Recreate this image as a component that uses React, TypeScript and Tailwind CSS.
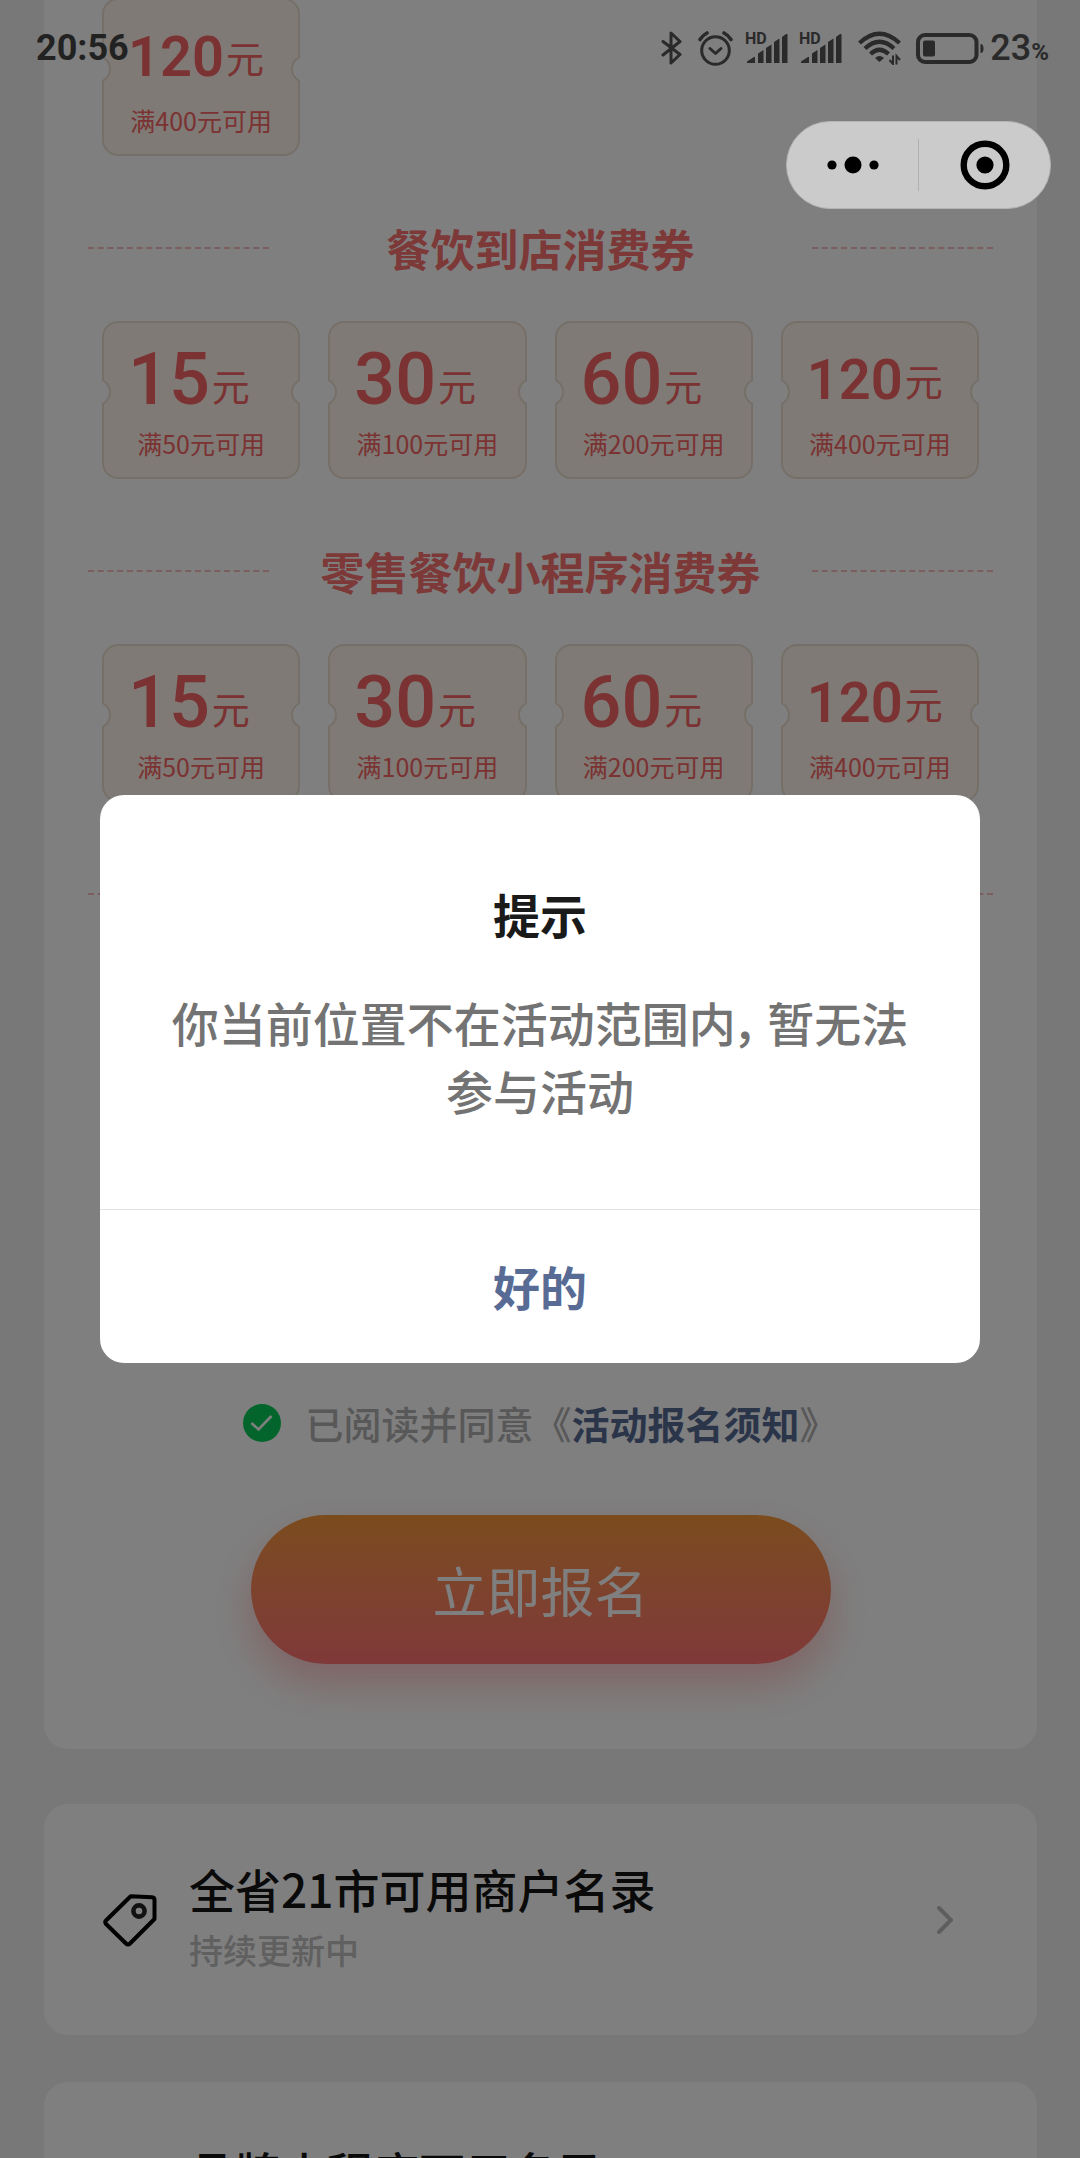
import React from "react";

type Coupon = { amount: string; threshold: string };

const COUPONS: Coupon[] = [
  { amount: "15", threshold: "满50元可用" },
  { amount: "30", threshold: "满100元可用" },
  { amount: "60", threshold: "满200元可用" },
  { amount: "120", threshold: "满400元可用" },
];

function Notch({ side }: { side: "left" | "right" }) {
  const left = side === "left";
  return (
    <span
      className={
        left
          ? "absolute -left-0.5 top-[55px] flex h-7 w-[9px] justify-end overflow-hidden"
          : "absolute -right-0.5 top-[55px] flex h-7 w-[9px] justify-start overflow-hidden"
      }
    >
      <span className="size-7 shrink-0 rounded-full border-2 border-[#eadfd0] bg-white" />
    </span>
  );
}

function CouponCard({ amount, threshold }: Coupon) {
  const long = amount.length > 2;
  return (
    <li className="relative rounded-2xl border-2 border-[#eadfd0] bg-[#fff4ea] pb-4 pt-[25px] text-[#f56464]">
      <Notch side="left" />
      <Notch side="right" />
      <p className="flex h-16 items-end gap-0.5 pl-6">
        <span
          className={
            long
              ? "font-['Roboto',sans-serif] text-[56px] font-semibold leading-[64px]"
              : "font-['Roboto',sans-serif] text-[72px] font-medium leading-[64px]"
          }
        >
          {amount}
        </span>
        <span className={long ? "text-[38px] leading-[64px]" : "text-[38px] leading-[54px]"}>元</span>
      </p>
      <p className="mt-[13px] text-center text-[25px] leading-9">{threshold}</p>
    </li>
  );
}

function CouponGrid({ coupons }: { coupons: Coupon[] }) {
  return (
    <ul className="grid grid-cols-4 gap-7 px-[58px]">
      {coupons.map((c) => (
        <CouponCard key={c.amount} {...c} />
      ))}
    </ul>
  );
}

function SectionHeader({ title }: { title?: string }) {
  return (
    <div className="mb-[43px] mt-[62px] flex h-[60px] items-center justify-between px-11">
      <span className="w-[181px] border-t-2 border-dashed border-[#f8bcbc]" />
      {title && <h2 className="text-[44px] font-bold leading-[60px] text-[#fa7070]">{title}</h2>}
      <span className="w-[181px] border-t-2 border-dashed border-[#f8bcbc]" />
    </div>
  );
}

function BluetoothIcon() {
  return (
    <svg width="21" height="34" viewBox="0 0 21 34" fill="none" stroke="currentColor" strokeWidth="3" strokeLinejoin="round" strokeLinecap="round">
      <path d="M2 10.5 L19 23.5 L10 32 V2 L19 10.5 L2 24" />
    </svg>
  );
}

function AlarmIcon() {
  return (
    <svg width="35" height="35" viewBox="0 0 35 35" fill="none" stroke="currentColor" strokeWidth="3" strokeLinecap="round">
      <circle cx="17.5" cy="19.5" r="13.8" />
      <path d="M12 17.5 L17.5 22.5 L23 17.5" strokeLinejoin="round" />
      <path d="M2 8.5 C4 5.5 6 3.5 9 2" strokeWidth="3.6" />
      <path d="M33 8.5 C31 5.5 29 3.5 26 2" strokeWidth="3.6" />
    </svg>
  );
}

function SignalIcon() {
  return (
    <svg width="42" height="32" viewBox="0 0 42 32" fill="currentColor" className="overflow-visible">
      <text x="-1" y="12" fontSize="16" fontWeight="700" fontFamily="Roboto, sans-serif">
        HD
      </text>
      <path d="M1 31 V29.500 L8 25 Q9 24.500 9 25.500 V31 Z" />
      <path d="M12 31 V21.500 L17.500 18 V31 Z" />
      <path d="M20 31 V16 L25.500 12.500 V31 Z" />
      <path d="M28 31 V10 L33.500 6.500 V31 Z" />
      <path d="M36 31 V5 L40 2 Q41.500 1.500 41.500 3 V31 Z" />
    </svg>
  );
}

function WifiIcon() {
  return (
    <svg width="43" height="34" viewBox="0 0 43 34" fill="none" stroke="currentColor" strokeWidth="4.2">
      <path d="M1.500 12 Q21.500 -6.500 41.500 12" />
      <path d="M7 17.500 Q21.500 4 36 17.500" />
      <path d="M12.500 23 Q21.500 14.500 30.500 23" />
      <path d="M17 27 Q21.500 23 26 27 L21.500 31 Z" fill="currentColor" stroke="none" />
      <path d="M35 24.500 V33 L31.500 29" strokeWidth="2" />
      <path d="M38.500 33.500 V25 L42 29" strokeWidth="2" />
    </svg>
  );
}

function BatteryIcon() {
  return (
    <svg width="68" height="31" viewBox="0 0 68 31" fill="none" stroke="currentColor">
      <rect x="2" y="2" width="58.500" height="27" rx="7" strokeWidth="4" />
      <rect x="7" y="7.500" width="12" height="16" rx="2" fill="currentColor" stroke="none" />
      <path d="M64.500 11 Q67.500 11 67.500 15.500 Q67.500 20 64.500 20 Z" fill="currentColor" stroke="none" />
    </svg>
  );
}

function StatusBar() {
  return (
    <div className="flex h-24 items-center justify-between pl-9 pr-[31px] text-[#222] font-['Roboto',sans-serif]">
      <time className="text-4xl font-bold">20:56</time>
      <div className="flex items-center text-[#2a2a2a]">
        <BluetoothIcon />
        <span className="ml-4">
          <AlarmIcon />
        </span>
        <span className="ml-[13px]">
          <SignalIcon />
        </span>
        <span className="ml-3">
          <SignalIcon />
        </span>
        <span className="ml-4">
          <WifiIcon />
        </span>
        <span className="ml-[15px]">
          <BatteryIcon />
        </span>
        <span className="ml-1.5 text-4xl font-medium">
          23<span className="text-2xl font-bold">%</span>
        </span>
      </div>
    </div>
  );
}

function MiniProgramCapsule() {
  return (
    <div className="mr-[29px] mt-[25px] flex h-[88px] w-[265px] items-center self-end rounded-full border border-[#b4b4b4] bg-[#cbcbcb] text-black">
      <button type="button" aria-label="更多" className="flex h-full flex-1 items-center justify-center">
        <svg width="52" height="18" viewBox="0 0 52 18" fill="currentColor">
          <circle cx="5" cy="9" r="4.600" />
          <circle cx="26" cy="9" r="8.500" />
          <circle cx="47" cy="9" r="4.600" />
        </svg>
      </button>
      <span className="h-[52px] w-px bg-[#b0b0b0]" />
      <button type="button" aria-label="关闭" className="flex h-full flex-1 items-center justify-center">
        <svg width="50" height="50" viewBox="0 0 50 50" fill="none">
          <circle cx="25" cy="25" r="21.300" stroke="currentColor" strokeWidth="6.400" />
          <circle cx="25" cy="25" r="8.600" fill="currentColor" />
        </svg>
      </button>
    </div>
  );
}

function TagIcon() {
  return (
    <svg width="54" height="54" viewBox="13 10 54 54" fill="none" stroke="#000" strokeLinejoin="round" className="shrink-0">
      <path d="M40.700 13.300 L62 14.300 Q64.500 14.500 64.500 17 V36 L40 60.500 Q38 62.500 36 60.500 L16 41 Q14.500 39 16 37.500 Z" strokeWidth="4" />
      <circle cx="49" cy="28" r="5.600" stroke="#222" strokeWidth="4.600" />
    </svg>
  );
}

function Modal() {
  return (
    <div
      role="dialog"
      aria-modal="true"
      aria-labelledby="tip-title"
      className="mx-[100px] w-full overflow-hidden rounded-3xl bg-white text-center"
    >
      <h1 id="tip-title" className="pt-[85px] text-[47px] font-bold leading-[68px] text-[#1a1a1a]">
        提示
      </h1>
      <p className="mt-10 px-16 pb-[85px] text-[47px] font-medium leading-[68px] text-[#737373]">
        你当前位置不在活动范围内<span className="pr-2 [font-feature-settings:'palt']">，</span>暂无法参与活动
      </p>
      <button type="button" className="block h-[154px] w-full border-t border-[#e2e2e2] text-[47px] font-bold text-[#576b95]">
        好的
      </button>
    </div>
  );
}

export default function App() {
  return (
    <div className="relative h-screen overflow-hidden bg-[#f0f0f0] font-['Noto_Sans_CJK_SC',sans-serif]">
      <main className="pl-11 pr-[43px]">
        <section className="rounded-b-3xl bg-white pb-[85px]">
          <div className="-mt-0.5">
            <CouponGrid coupons={COUPONS.slice(3)} />
          </div>
          <SectionHeader title="餐饮到店消费券" />
          <CouponGrid coupons={COUPONS} />
          <SectionHeader title="零售餐饮小程序消费券" />
          <CouponGrid coupons={COUPONS} />
          <SectionHeader />

          <div className="mt-[471px] flex h-14 items-center justify-center gap-6 text-[38px] leading-[56px]">
            <span className="relative size-[38px]">
              <input
                id="agree"
                type="checkbox"
                defaultChecked
                className="block size-full appearance-none rounded-full border-2 border-[#ccc] checked:border-0 checked:bg-[#06cb58]"
              />
              <svg viewBox="0 0 38 38" className="pointer-events-none absolute inset-0" fill="none" stroke="#fff" strokeWidth="2.600">
                <path d="M8.500 19 L15.500 25.500 L28.500 12" />
              </svg>
            </span>
            <label htmlFor="agree" className="font-medium text-[#b0b0b0]">
              已阅读并同意《
              <a href="#notice" className="font-bold text-[#576b95]">
                活动报名须知
              </a>
              》
            </label>
          </div>

          <button
            type="button"
            className="mx-auto mt-16 block h-[149px] w-[580px] rounded-full bg-linear-to-b from-[#f6983a] to-[#ff7272] text-[54px] text-white shadow-[0_20px_40px_rgba(255,114,114,0.4)]"
          >
            立即报名
          </button>
        </section>

        <a href="#merchants" className="mt-[55px] flex h-[231px] items-center rounded-3xl bg-white pl-[59px] pr-[84px]">
          <TagIcon />
          <span className="ml-8 flex flex-1 flex-col gap-2 pb-2">
            <span className="text-[46px] font-medium leading-[60px] text-[#141414]">全省21市可用商户名录</span>
            <span className="text-[34px] font-medium leading-[48px] text-[#c0c0c0]">持续更新中</span>
          </span>
          <svg width="16" height="28" viewBox="0 0 16 28" fill="none" stroke="#bdbdbd" strokeWidth="4" strokeLinecap="round">
            <path d="M2 2 L14 14 L2 26" />
          </svg>
        </a>

        <a href="#brands" className="mt-[47px] flex h-[231px] items-start rounded-3xl bg-white pl-[145px] pt-[59px]">
          <span className="text-[46px] font-medium leading-[60px] text-[#141414]">品牌小程序可用名录</span>
        </a>
      </main>

      <div className="absolute inset-0 flex items-center bg-black/50">
        <Modal />
      </div>

      <header className="absolute inset-x-0 top-0 flex h-[210px] flex-col">
        <StatusBar />
        <MiniProgramCapsule />
      </header>
    </div>
  );
}
